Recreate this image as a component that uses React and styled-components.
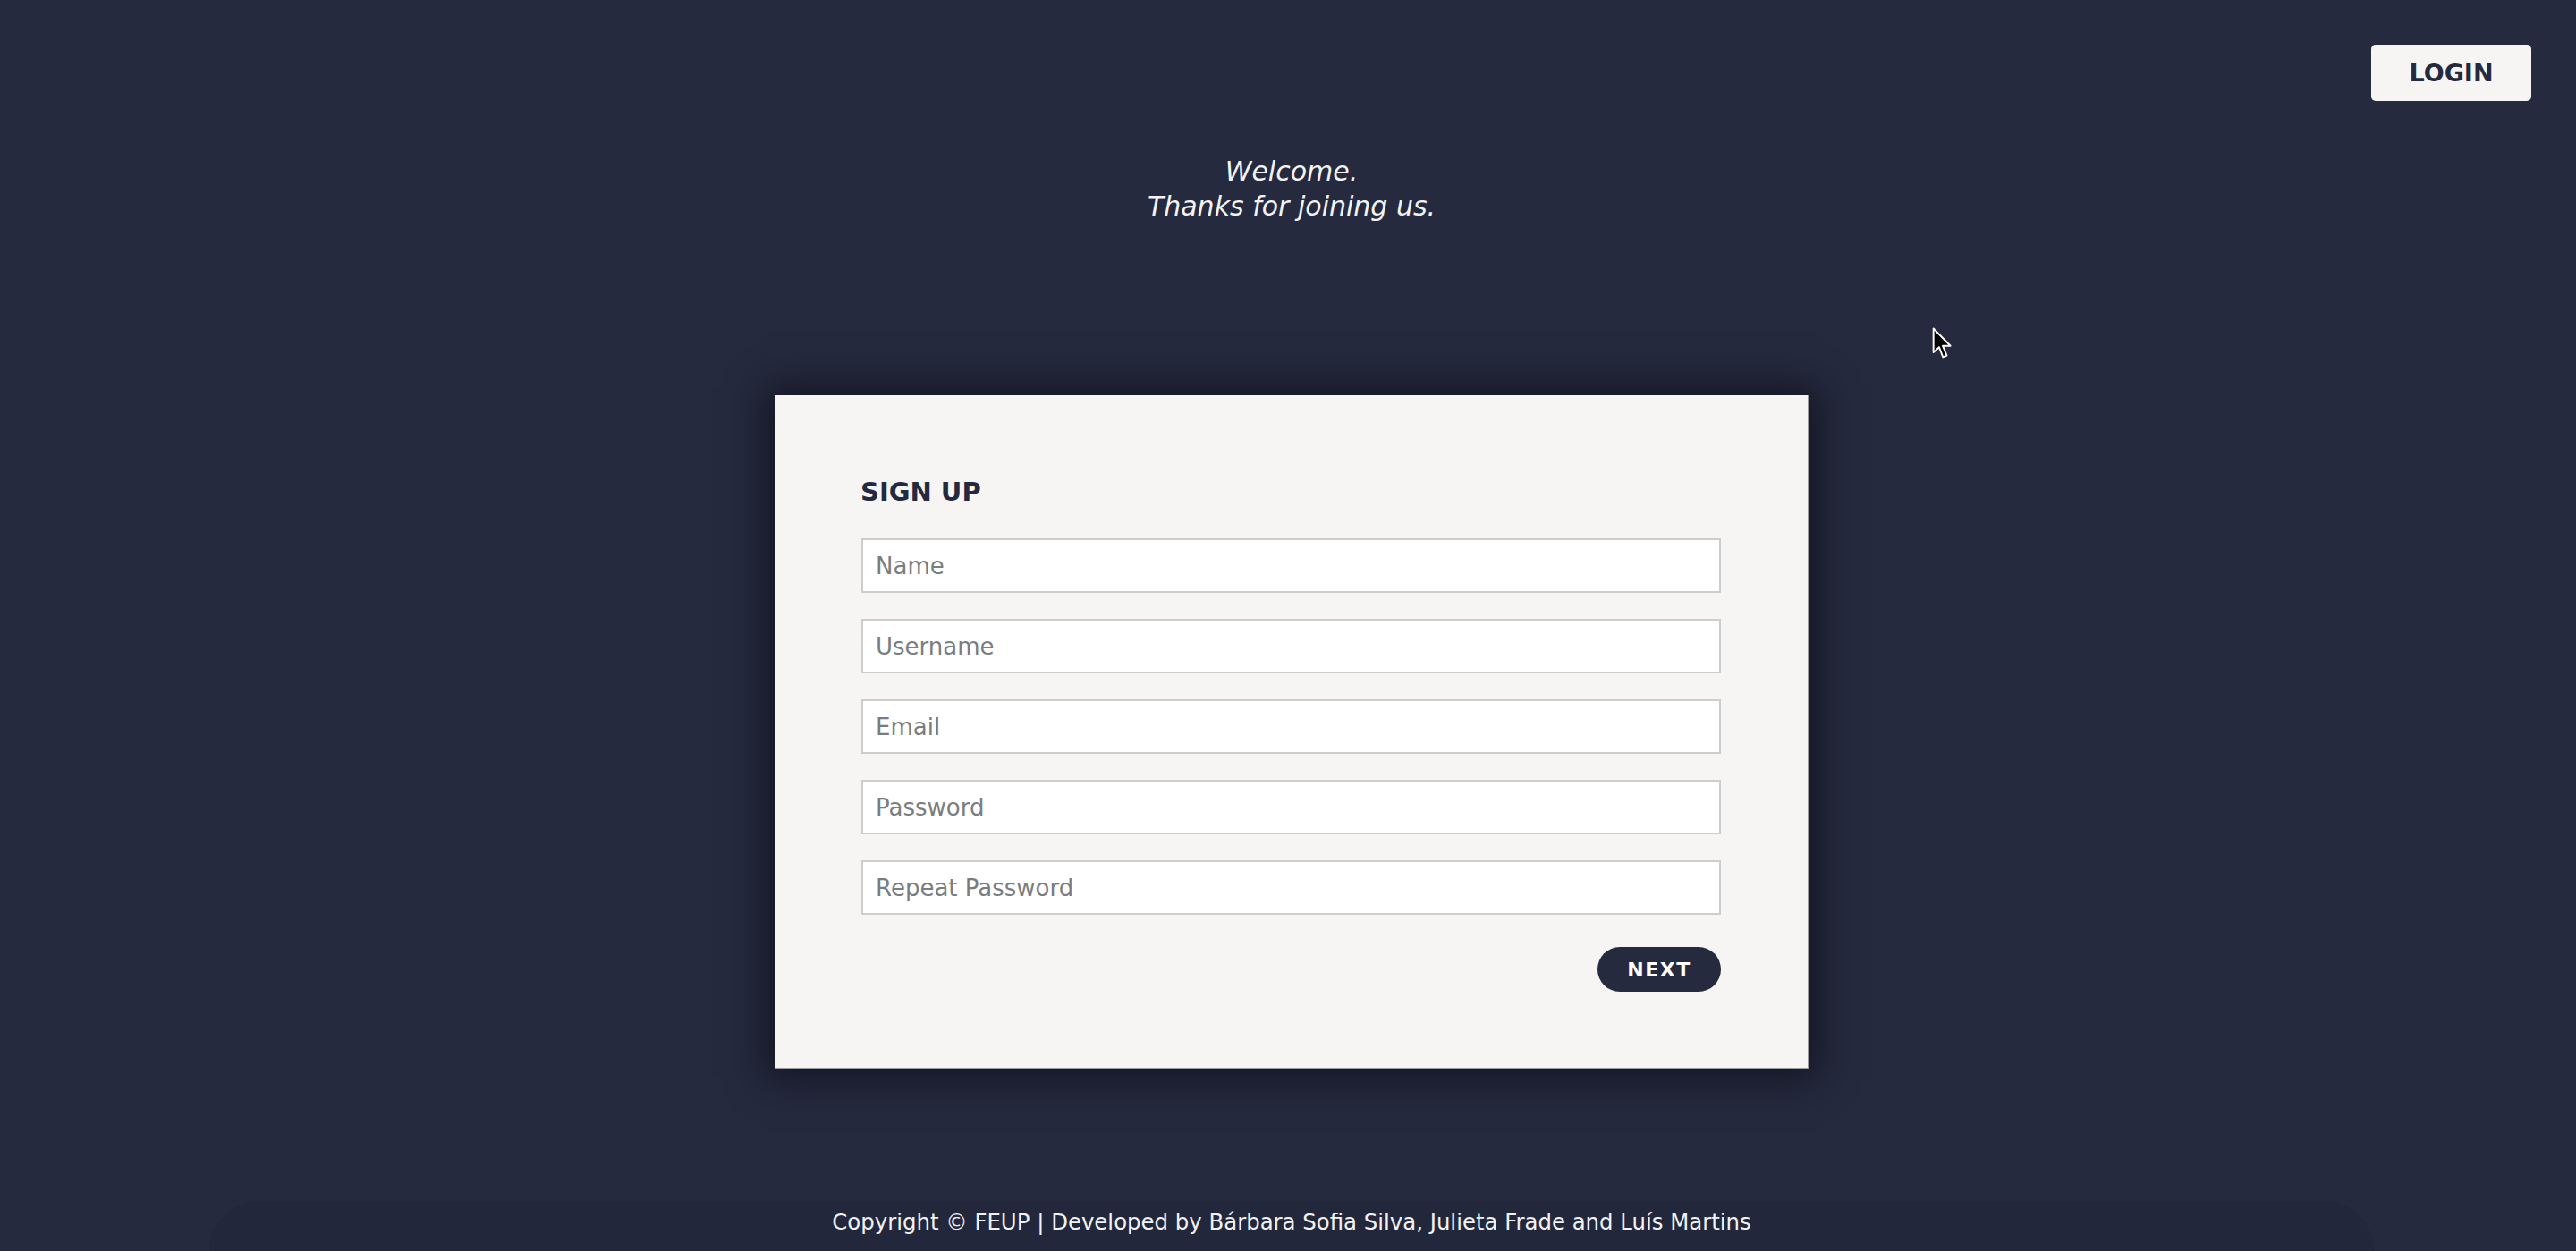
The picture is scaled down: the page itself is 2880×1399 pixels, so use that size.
import React from "react";
import styled, { createGlobalStyle } from "styled-components";

const GlobalStyle = createGlobalStyle`
  html, body {
    margin: 0;
    padding: 0;
    background: #252a3e;
  }
  body {
    font-family: "DejaVu Sans", "Liberation Sans", sans-serif;
  }
  * { box-sizing: border-box; }
`;

const Page = styled.div`
  position: relative;
  width: 2880px;
  height: 1399px;
  overflow: hidden;
  background: #252a3e;
  padding-left: 8px;
  display: flex;
  flex-direction: column;
  align-items: center;
`;

const Header = styled.header`
  width: 100%;
  display: flex;
  justify-content: flex-end;
  padding: 50px 50px 0 0;
`;

const LoginButton = styled.button`
  width: 179px;
  height: 63px;
  border: none;
  border-radius: 5px;
  background: #f7f5f3;
  color: #252a3e;
  font-family: "DejaVu Sans", sans-serif;
  font-weight: 700;
  font-size: 27px;
  cursor: pointer;
  padding: 0;
`;

const Welcome = styled.div`
  margin-top: 59px;
  color: #f4f4f6;
  font-family: "DejaVu Sans", sans-serif;
  font-style: italic;
  font-weight: 200;
  font-size: 30px;
  line-height: 39px;
  text-align: center;
`;

const Card = styled.section`
  margin-top: 192px;
  width: 1156px;
  height: 754px;
  background: #f7f5f3;
  border-right: 1px solid #9a9a9a;
  border-bottom: 2px solid #9a9a9a;
  box-shadow: 0 0 40px 10px rgba(14, 16, 28, 0.8);
  padding: 89px 98px 0 97px;
  display: flex;
  flex-direction: column;
`;

const Title = styled.h2`
  margin: 0 0 33px -1px;
  color: #232a3f;
  font-family: "DejaVu Sans", sans-serif;
  font-weight: 700;
  font-size: 29px;
  line-height: 38px;
`;

const Fields = styled.div`
  display: flex;
  flex-direction: column;
  gap: 29px;
`;

const Field = styled.input`
  width: 961px;
  height: 61px;
  border: 2px solid #cdcdcd;
  background: #ffffff;
  padding: 0 14px;
  font-family: "DejaVu Sans", sans-serif;
  font-size: 26px;
  color: #333;
  outline: none;
  &::placeholder {
    color: #7a7d80;
  }
`;

const Actions = styled.div`
  width: 961px;
  display: flex;
  justify-content: flex-end;
  margin-top: 36px;
`;

const NextButton = styled.button`
  width: 138px;
  height: 50px;
  border: none;
  border-radius: 25px;
  background: #252a3e;
  color: #ffffff;
  font-family: "DejaVu Sans", sans-serif;
  font-weight: 700;
  font-size: 22px;
  letter-spacing: 1.5px;
  cursor: pointer;
  padding: 0;
`;

const Footer = styled.footer`
  margin-top: auto;
  width: 2420px;
  height: 56px;
  background: #22273b;
  border-radius: 60px 60px 0 0;
  display: flex;
  align-items: center;
  justify-content: center;
  color: #f2f2f4;
  font-family: "DejaVu Sans", sans-serif;
  font-size: 24.4px;
  padding-bottom: 10px;
`;

const Cursor = styled.svg`
  position: absolute;
  left: 2160px;
  top: 366px;
  width: 24px;
  height: 37px;
`;

export default function App() {
  const fields = ["Name", "Username", "Email", "Password", "Repeat Password"];
  return (
    <>
      <GlobalStyle />
      <Page>
        <Header>
          <LoginButton>LOGIN</LoginButton>
        </Header>
        <Welcome>
          Welcome.
          <br />
          Thanks for joining us.
        </Welcome>
        <Card>
          <Title>SIGN UP</Title>
          <Fields>
            {fields.map((f) => (
              <Field
                key={f}
                placeholder={f}
                type={f.toLowerCase().includes("password") ? "password" : "text"}
              />
            ))}
          </Fields>
          <Actions>
            <NextButton>NEXT</NextButton>
          </Actions>
        </Card>
        <Footer>
          Copyright © FEUP | Developed by Bárbara Sofia Silva, Julieta Frade and Luís Martins
        </Footer>
        <Cursor viewBox="0 0 16 25">
          <path
            d="M1 1 L1 19 L5.2 15 L8.2 22.5 L11 21.3 L8 14 L13.8 14 Z"
            fill="#000"
            stroke="#fff"
            strokeWidth="1.3"
            strokeLinejoin="round"
          />
        </Cursor>
      </Page>
    </>
  );
}
